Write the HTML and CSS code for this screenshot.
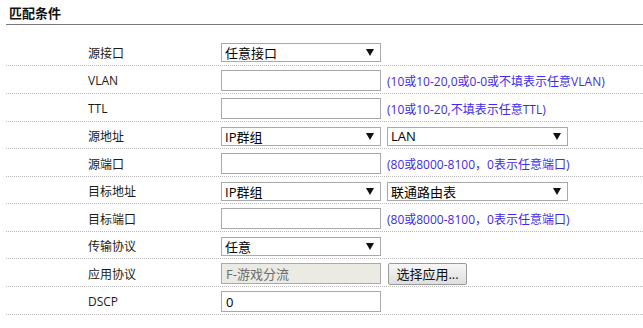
FILE: index.html
```html
<!DOCTYPE html>
<html lang="zh-CN">

<head>
    <meta charset="UTF-8">
    <title>匹配条件</title>
    <link rel="stylesheet" href="styles.css">
</head>

<body>
    <div class="panel">
        <div class="panel-title">匹配条件</div>

        <div class="form">
            <div class="row first">
                <div class="label">源接口</div>
                <div class="select"><span>任意接口</span><i class="arrow"></i></div>
            </div>
            <div class="row tall">
                <div class="label">VLAN</div>
                <div class="input"></div>
                <div class="hint">(10或10-20,0或0-0或不填表示任意VLAN)</div>
            </div>
            <div class="row tall">
                <div class="label">TTL</div>
                <div class="input"></div>
                <div class="hint">(10或10-20,不填表示任意TTL)</div>
            </div>
            <div class="row">
                <div class="label">源地址</div>
                <div class="select"><span>IP群组</span><i class="arrow"></i></div>
                <div class="select wide"><span>LAN</span><i class="arrow"></i></div>
            </div>
            <div class="row tall">
                <div class="label">源端口</div>
                <div class="input"></div>
                <div class="hint">(80或8000-8100，0表示任意端口)</div>
            </div>
            <div class="row">
                <div class="label">目标地址</div>
                <div class="select"><span>IP群组</span><i class="arrow"></i></div>
                <div class="select wide"><span>联通路由表</span><i class="arrow"></i></div>
            </div>
            <div class="row tall">
                <div class="label">目标端口</div>
                <div class="input"></div>
                <div class="hint">(80或8000-8100，0表示任意端口)</div>
            </div>
            <div class="row">
                <div class="label">传输协议</div>
                <div class="select"><span>任意</span><i class="arrow"></i></div>
            </div>
            <div class="row tall">
                <div class="label">应用协议</div>
                <div class="input disabled">F-游戏分流</div>
                <div class="button">选择应用...</div>
            </div>
            <div class="row tall">
                <div class="label">DSCP</div>
                <div class="input">0</div>
            </div>
        </div>
    </div>
</body>

</html>
```

FILE: styles.css
```css
body {
    margin: 0;
    background-color: #ffffff;
    color: #222222;
    font-family: 'Open Sans', 'Noto Sans CJK SC', sans-serif;
    font-size: 12px;
}

.panel {
    padding: 0 0 0 6px;
}

.panel-title {
    height: 24px;
    line-height: 26px;
    padding-left: 3px;
    font-size: 13px;
    font-weight: bold;
    color: #111111;
    border-bottom: 1px solid #7a7a7a;
}

.form {
    margin-top: 13px;
}

.row {
    display: grid;
    grid-template-columns: 209px 160px auto;
    column-gap: 6px;
    align-items: center;
    height: 24px;
    padding-top: 2px;
    border-bottom: 1px dotted #b8b8b8;
}

.row.tall,
.row.first {
    height: 25px;
}

.label {
    padding-left: 82px;
    color: #1e1a14;
}

.select,
.input {
    box-sizing: border-box;
    display: flex;
    align-items: center;
    justify-content: space-between;
    background-color: #ffffff;
    border: 1px solid #a9a9a9;
    font-size: 13px;
    color: #000000;
    padding: 0 6px 0 3px;
}

.select {
    height: 19px;
}

.select.wide {
    width: 181px;
}

.input {
    height: 21px;
    padding-left: 4px;
}

.input.disabled {
    background-color: #ebebe4;
    color: #6d6d6d;
}

.arrow {
    width: 0;
    height: 0;
    border-left: 4px solid transparent;
    border-right: 4px solid transparent;
    border-top: 7px solid #111111;
}

.hint {
    color: #3d2af0;
    white-space: nowrap;
}

.button {
    box-sizing: border-box;
    width: 79px;
    height: 22px;
    margin-left: 1px;
    line-height: 20px;
    text-align: center;
    font-size: 13px;
    color: #111111;
    border: 1px solid #9a9a9a;
    border-radius: 2px;
    background: linear-gradient(#f6f6f6, #dedede);
}
```
